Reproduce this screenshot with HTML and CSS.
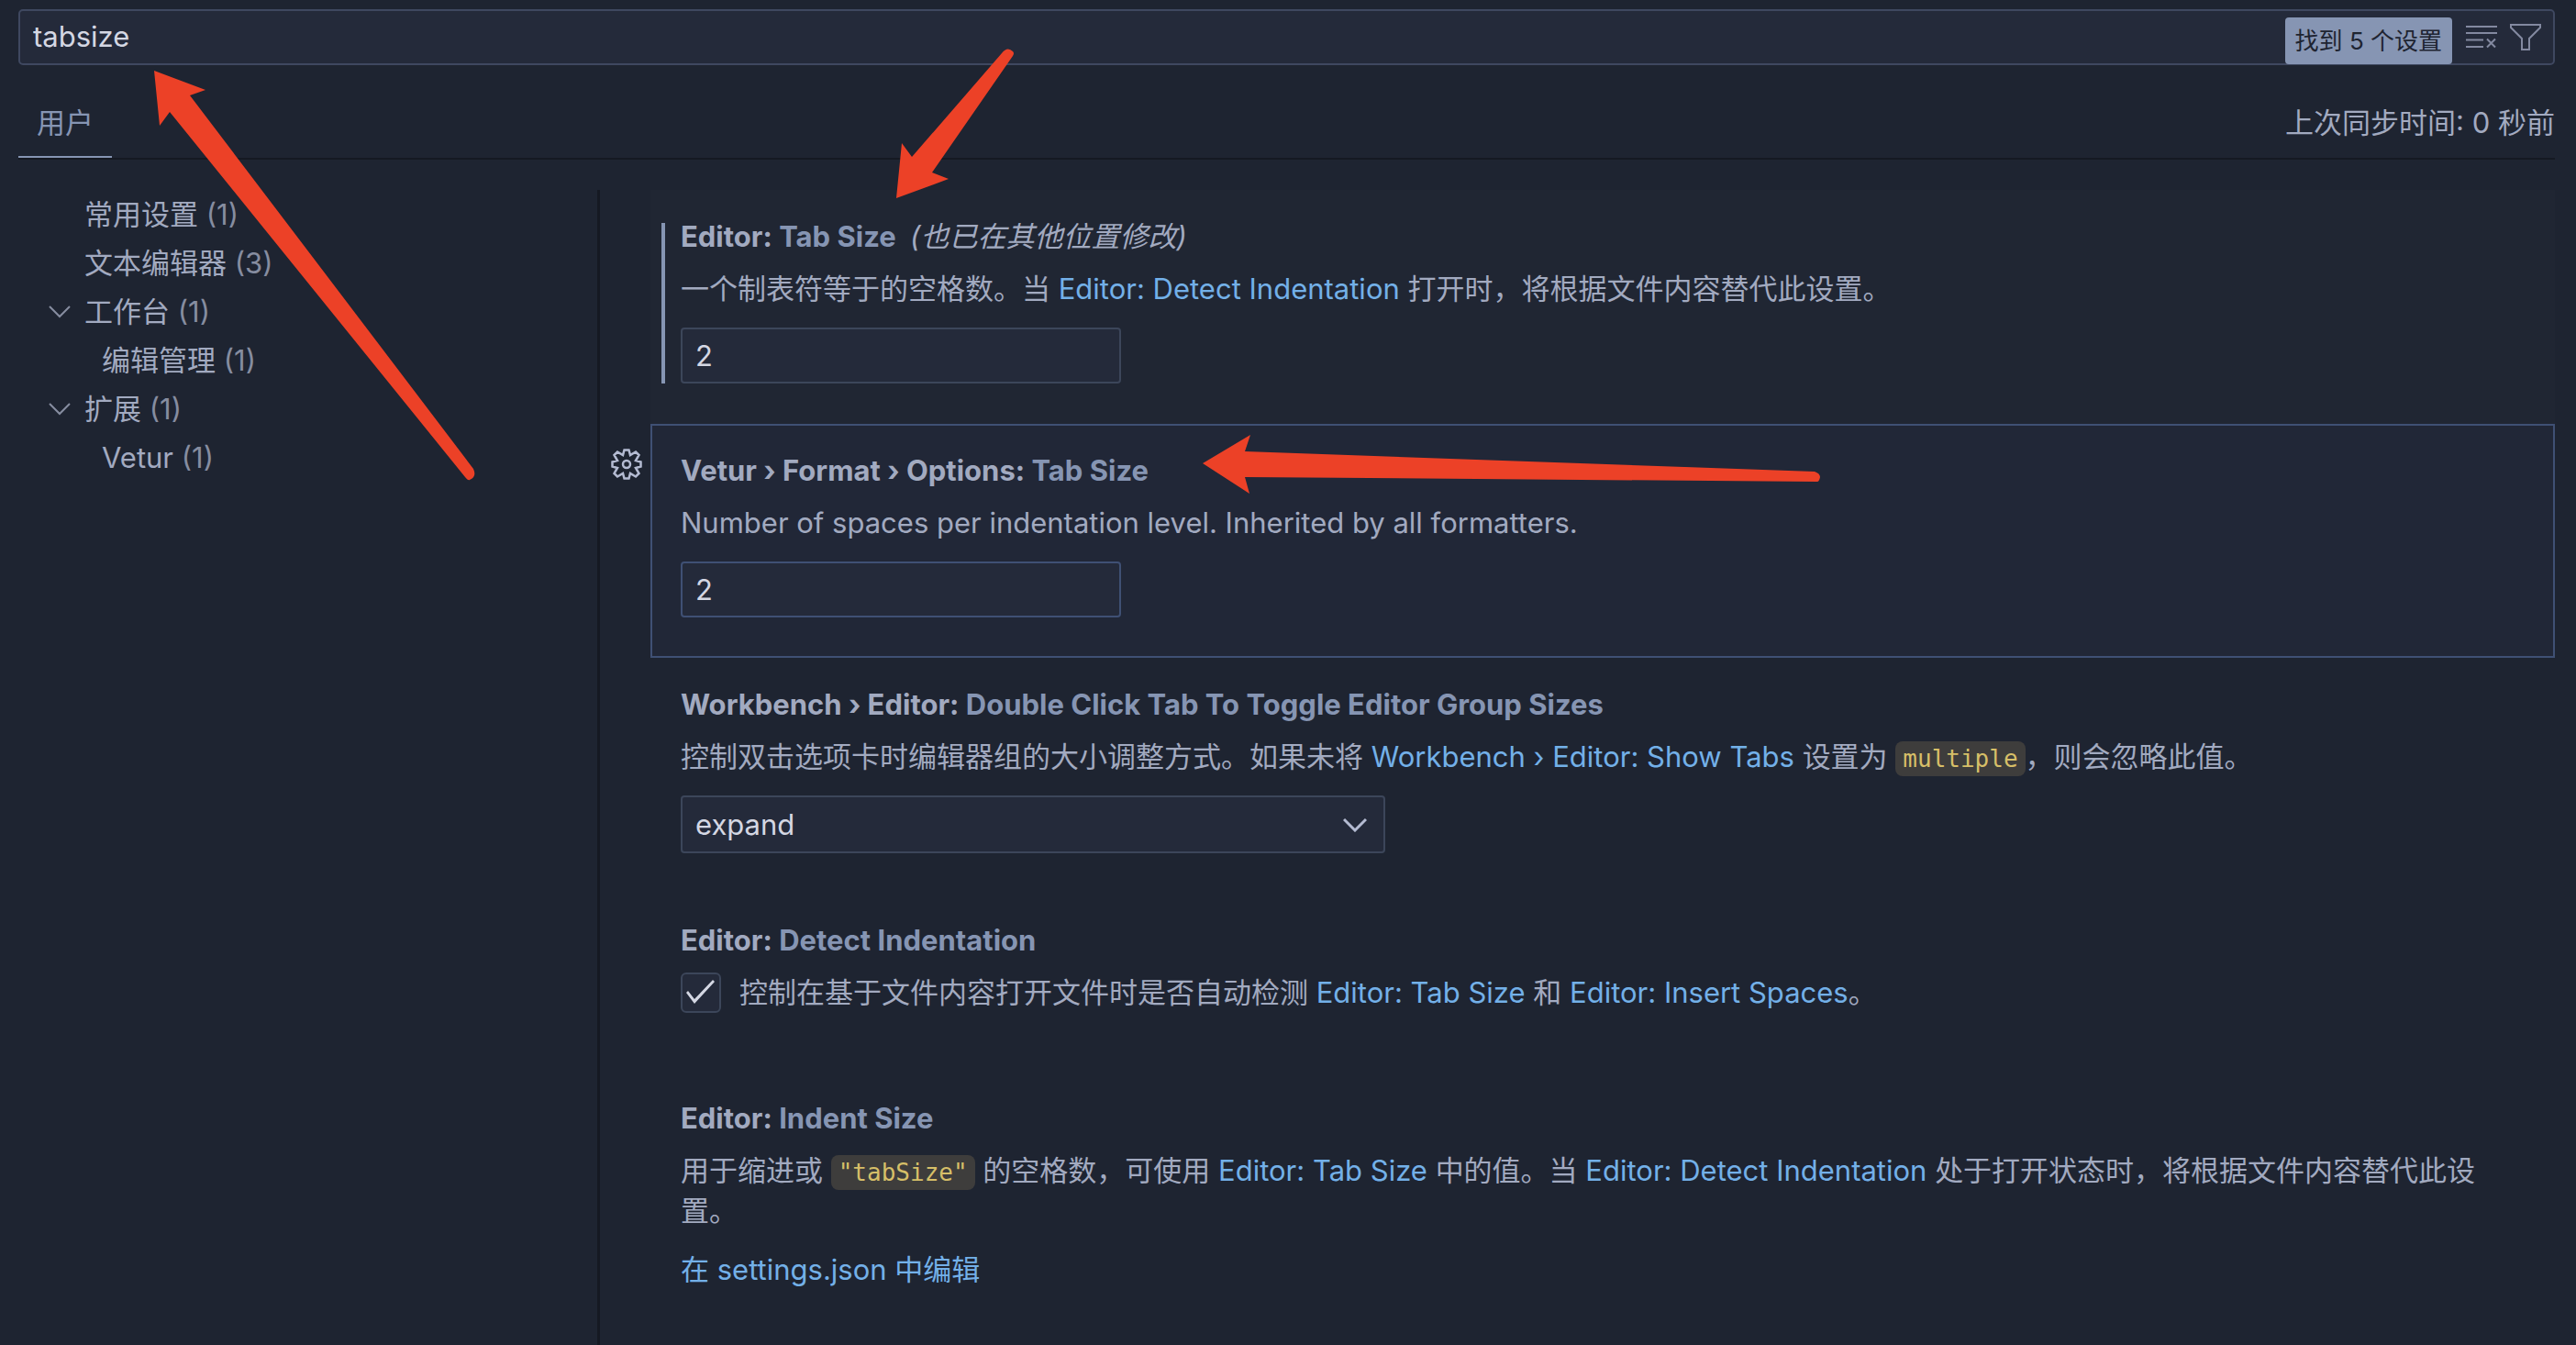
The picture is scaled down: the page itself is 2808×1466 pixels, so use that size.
FILE: index.html
```html
<!DOCTYPE html>
<html lang="zh-CN">
<head>
  <meta charset="UTF-8">
  <meta name="viewport" content="width=device-width, initial-scale=1.0">
  <title>设置</title>
  <link rel="stylesheet" href="styles.css">
</head>
<body>
  <div class="settings">
    <header class="header">
      <div class="search">
        <input class="search-input" type="text" value="tabsize" aria-label="搜索设置">
        <span class="count">找到 5 个设置</span>
        <button class="icon-btn" type="button" aria-label="清除搜索">
          <svg viewBox="0 0 36 36" width="36" height="36" fill="none" stroke="#8389a0" stroke-width="2">
            <path d="M1 7h34M1 14h34M1 21.500h19M1 29h19M24 20.500l9 9M33 20.500l-9 9"/>
          </svg>
        </button>
        <button class="icon-btn" type="button" aria-label="筛选设置">
          <svg viewBox="0 0 36 36" width="36" height="36" fill="none" stroke="#8389a0" stroke-width="2">
            <path d="M2 5h32v3L22 20v12h-8V20L2 8z"/>
          </svg>
        </button>
      </div>
      <div class="tabs">
        <a class="tab" href="#user">用户</a>
        <span class="sync">上次同步时间: 0 秒前</span>
      </div>
    </header>

    <div class="main">
      <nav class="toc">
        <ul class="toc-list">
          <li><a href="#common">常用设置 <span class="num">(1)</span></a></li>
          <li><a href="#text">文本编辑器 <span class="num">(3)</span></a></li>
          <li>
            <svg class="arrow" viewBox="0 0 24 16" width="24" height="16"><path d="M1 2l11 11L23 2"/></svg>
            <a href="#workbench">工作台 <span class="num">(1)</span></a>
          </li>
          <li class="sub"><a href="#manage">编辑管理 <span class="num">(1)</span></a></li>
          <li>
            <svg class="arrow" viewBox="0 0 24 16" width="24" height="16"><path d="M1 2l11 11L23 2"/></svg>
            <a href="#ext">扩展 <span class="num">(1)</span></a>
          </li>
          <li class="sub"><a href="#vetur">Vetur <span class="num">(1)</span></a></li>
        </ul>
      </nav>

      <div class="list">
        <section class="item hover">
          <div class="modified">
            <h3 class="title"><label for="tab-size">Editor: <span class="key">Tab Size</span></label> <em class="note">(也已在其他位置修改)</em></h3>
            <p class="desc">一个制表符等于的空格数。当 <a href="#detect">Editor: Detect Indentation</a> 打开时，将根据文件内容替代此设置。</p>
            <input class="text" id="tab-size" type="text" value="2">
          </div>
        </section>

        <section class="item focused">
          <button class="gear" type="button" aria-label="更多操作">
            <svg viewBox="0 0 36 36" width="36" height="36" fill="none" stroke="#b4bbd2" stroke-width="2.500">
              <path d="M15.500 2.500h5L22 8l6-3.500L31.500 8L28 14l5.500 1.500v5L28 22l3.500 6-3.500 3.500L22 28l-1.500 5.500h-5L14 28l-6 3.500L4.500 28 8 22l-5.500-1.500v-5L8 14 4.500 8 8 4.500l6 3.500z"/>
              <circle cx="18" cy="18" r="4"/>
            </svg>
          </button>
          <h3 class="title"><label for="vetur-size">Vetur › Format › Options: <span class="key">Tab Size</span></label></h3>
          <p class="desc">Number of spaces per indentation level. Inherited by all formatters.</p>
          <input class="text" id="vetur-size" type="text" value="2">
        </section>

        <section class="item">
          <h3 class="title"><label for="double-click">Workbench › Editor: <span class="key">Double Click Tab To Toggle Editor Group Sizes</span></label></h3>
          <p class="desc">控制双击选项卡时编辑器组的大小调整方式。如果未将 <a href="#show-tabs">Workbench › Editor: Show Tabs</a> 设置为 <code>multiple</code>，则会忽略此值。</p>
          <div class="select-box">
            <select class="select" id="double-click">
              <option>expand</option>
            </select>
            <svg class="select-arrow" viewBox="0 0 26 16" width="26" height="16"><path d="M1 2l12 12L25 2"/></svg>
          </div>
        </section>

        <section class="item" id="detect">
          <h3 class="title">Editor: <span class="key">Detect Indentation</span></h3>
          <div class="check-row">
            <input class="check" id="detect-check" type="checkbox" checked>
            <label class="desc" for="detect-check">控制在基于文件内容打开文件时是否自动检测 <a href="#tab-size">Editor: Tab Size</a> 和 <a href="#insert">Editor: Insert Spaces</a>。</label>
          </div>
        </section>

        <section class="item">
          <h3 class="title">Editor: <span class="key">Indent Size</span></h3>
          <p class="desc">用于缩进或 <code>"tabSize"</code> 的空格数，可使用 <a href="#tab-size">Editor: Tab Size</a> 中的值。当 <a href="#detect">Editor: Detect Indentation</a> 处于打开状态时，将根据文件内容替代此设置。</p>
          <a class="edit" href="#json">在 settings.json 中编辑</a>
        </section>
      </div>
    </div>
  </div>

  <!-- 红色标注箭头 -->
  <svg class="arrows" viewBox="0 0 2808 1466" width="2808" height="1466">
    <path d="M168 77L224 98L207 104L516 511Q520 520 512 523Q510 524 507 520L185 122L174 137Z"/>
    <path d="M977 216L983 156L994 171L1092 58Q1098 50 1104 56Q1106 58 1104 61L1016 188L1034 195Z"/>
    <path d="M1311 505L1363 474L1357 492L1978 514Q1984 516 1984 520Q1983 525 1981 525L1357 520L1362 538Z"/>
  </svg>
</body>
</html>
```

FILE: styles.css
```css
*{
  box-sizing: border-box;
  margin: 0;
  padding: 0;
}
body{
  background: #1e2431;
  color: #a2aac0;
  font-family: Inter, "Noto Sans CJK SC", sans-serif;
  font-size: 31px;
  line-height: 44px;
}
a{
  color: #73b0e8;
  text-decoration: none;
}
input,select,button{
  font: inherit;
}
button{
  background: none;
  border: 0;
}
.settings{
  display: flex;
  flex-direction: column;
  min-height: 100vh;
  overflow: hidden;
}
.header{
  padding: 10px 23px 0 20px;
}
.search{
  display: flex;
  align-items: center;
  height: 61px;
  padding: 0 12px 2px 0;
  background: #242a3a;
  border: 2px solid #3f4860;
  border-radius: 5px;
}
.search-input{
  flex: 1;
  padding-left: 14px;
  background: none;
  border: 0;
  outline: 0;
  color: #d4d7e3;
}
.count{
  align-self: flex-end;
  margin: 0 14px -3px 0;
  padding: 4px 11px 3px;
  background: #8695b3;
  border-radius: 4px;
  color: #1e2431;
  font-size: 26px;
}
.icon-btn{
  display: flex;
  margin-left: 12px;
}
.count + .icon-btn{
  margin-left: 0;
}
.tabs{
  display: flex;
  justify-content: space-between;
  height: 103px;
  padding-top: 22px;
  border-bottom: 2px solid #151922;
}
.tab{
  padding: 19px 20px 0;
  border-bottom: 2px solid #8695b3;
  color: #8695b3;
}
.sync{
  padding-top: 19px;
}
.main{
  display: flex;
  flex: 1;
  padding: 33px 23px 0 0;
}
.toc{
  width: 654px;
  border-right: 3px solid #151922;
}
.toc-list{
  list-style: none;
}
.toc-list li{
  display: flex;
  align-items: center;
  height: 53px;
  padding-left: 92px;
}
.toc-list .sub{
  padding-left: 111px;
}
.toc-list a{
  color: #a2aac0;
}
.toc-list .num{
  color: #868da0;
}
.arrow{
  margin: 0 15px 0 -39px;
  fill: none;
  stroke: #868da0;
  stroke-width: 2;
}
.list{
  flex: 1;
  margin-left: 55px;
}
.item{
  position: relative;
  padding: 34px 31px 42px;
  border: 2px solid transparent;
}
.hover{
  background: #202633;
}
.focused{
  background: #212737;
  border-color: #3f5074;
}
.modified{
  margin-left: -21px;
  padding-left: 17px;
  border-left: 4px solid #8695b3;
}
.title{
  font-size: 31px;
  font-weight: 700;
  line-height: 30px;
}
.key{
  color: #8695b3;
}
.note{
  margin-left: 8px;
  font-weight: 400;
}
.desc{
  margin-top: 20px;
}
.text{
  display: block;
  width: 480px;
  height: 61px;
  margin-top: 20px;
  padding-left: 14px;
  background: #242a3a;
  border: 2px solid #3c465a;
  border-radius: 4px;
  color: #d4d7e3;
}
.focused .text{
  border-color: #3f5074;
}
.gear{
  position: absolute;
  top: 24px;
  left: -46px;
  display: flex;
}
.select-box{
  display: flex;
  align-items: center;
  width: 768px;
  margin-top: 20px;
}
.select{
  flex: 1;
  height: 63px;
  padding-left: 14px;
  appearance: none;
  background: #242a3a;
  border: 2px solid #3c465a;
  border-radius: 4px;
  color: #d4d7e3;
}
.select-arrow{
  margin-left: -46px;
  margin-right: 20px;
  fill: none;
  stroke: #b4bbd2;
  stroke-width: 3;
  pointer-events: none;
}
.check-row{
  display: flex;
  align-items: center;
  gap: 20px;
  margin: 20px 0;
}
.check-row .desc{
  margin: 0;
}
.check{
  width: 44px;
  height: 44px;
  padding: 6px 4px;
  appearance: none;
  background: #242a3a;
  border: 2px solid #3c465a;
  border-radius: 6px;
}
.check:checked::before{
  content: "";
  display: block;
  width: 32px;
  height: 28px;
  background: #d4d7e3;
  clip-path: polygon(0 14px, 2px 12px, 9px 21px, 29px 0, 31px 2px, 9px 26px);
}
code{
  padding: 4px 8px;
  background: #3e3d3c;
  border-radius: 8px;
  color: #d6bf68;
  font-family: "DejaVu Sans Mono", monospace;
  font-size: 26px;
  line-height: 1;
}
.edit{
  display: inline-block;
  margin-top: 20px;
}
.arrows{
  position: absolute;
  top: 0;
  left: 0;
  fill: #ec4127;
  pointer-events: none;
}
```
